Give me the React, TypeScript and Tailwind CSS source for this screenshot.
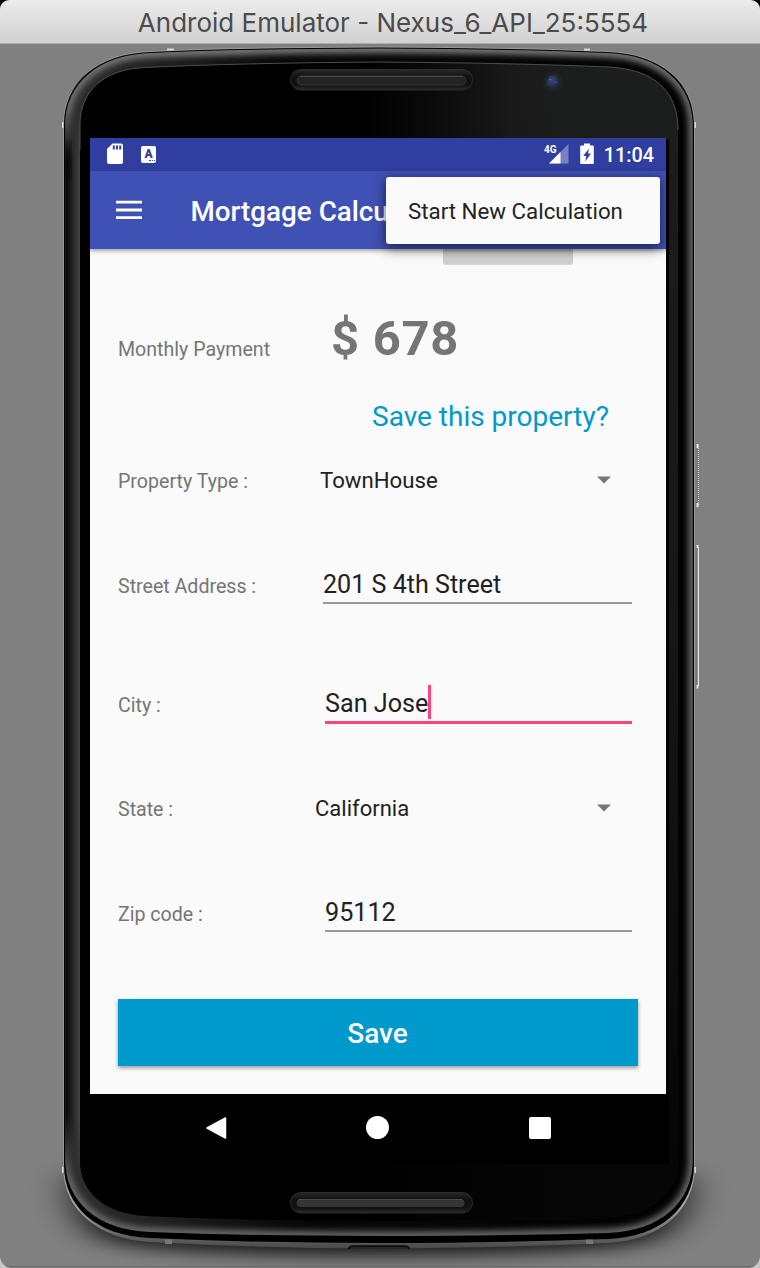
import React from "react";

const OUTER = "M64 125 C64 82 97 54 150 52 Q240 48 379 47.5 Q518 48 608 52 C661 54 694 82 694 125 V1165 C694 1207 661 1237 608 1239 Q500 1243 379 1243 Q258 1243 150 1238 C97 1236 64 1207 64 1165 Z";
const METAL = "M63.2 125 C63.2 82 97 53 150 51 Q240 47 379 46.5 Q518 47 608 51 C661 53 694.8 82 694.8 125 V1167 C694.8 1210 661 1240 608 1243 Q500 1248 379 1248.5 Q258 1248 150 1242 C97 1239 63.2 1209 63.2 1167 Z";
const BEVEL = "M65.2 125 C65.2 84 98 55 150 53 Q240 49 379 48.500 Q518 49 608 53 C660 55 692.8 84 692.8 125 V1160 C692.8 1202 661 1231 608 1233 Q500 1236 379 1236 Q258 1236 150 1232 C97 1230 65.2 1201 65.2 1160 Z";
const GLASS = "M80 125 C80 90 105 69 145 67.5 Q240 63 379 62 Q518 63 608 67 C653 69 678 90 678 130 V1160 C678 1193 650 1215 608 1217 Q500 1221 379 1221 Q258 1221 145 1216 C105 1213 80 1193 80 1160 Z";

function PhoneArt() {
  return (
    <svg className="absolute inset-0 h-full w-full" viewBox="0 44 760 1224">
      <defs>
        <linearGradient id="glass" gradientUnits="userSpaceOnUse" x1="360" y1="0" x2="560" y2="0">
          <stop offset="0" stopColor="#000" />
          <stop offset=".35" stopColor="#0a0a0a" />
          <stop offset=".75" stopColor="#181918" />
          <stop offset="1" stopColor="#1c1d1d" />
        </linearGradient>
        <linearGradient id="fade" x1="0" y1="0" x2="0" y2="1">
          <stop offset="0" stopColor="#000" stopOpacity="0" />
          <stop offset=".45" stopColor="#000" stopOpacity=".2" />
          <stop offset=".95" stopColor="#000" stopOpacity=".8" />
        </linearGradient>
        <linearGradient id="base" x1="0" y1="0" x2="1" y2="0">
          <stop offset="0" stopColor="#303030" />
          <stop offset=".14" stopColor="#222" />
          <stop offset=".35" stopColor="#080808" />
          <stop offset="1" stopColor="#020202" />
        </linearGradient>
        <linearGradient id="leftEdge" x1="0" y1="0" x2="1" y2="0">
          <stop offset="0" stopColor="#050505" />
          <stop offset=".5" stopColor="#232323" />
          <stop offset="1" stopColor="#454545" />
        </linearGradient>
        <linearGradient id="leftMask" x1="0" y1="0" x2="0" y2="1">
          <stop offset="0" stopColor="#fff" stopOpacity="0" />
          <stop offset=".05" stopColor="#fff" />
          <stop offset=".94" stopColor="#fff" />
          <stop offset="1" stopColor="#fff" stopOpacity="0" />
        </linearGradient>
        <mask id="sideMask">
          <rect x="60" y="110" width="25" height="1070" fill="url(#leftMask)" />
        </mask>
        <linearGradient id="rim" gradientUnits="userSpaceOnUse" x1="0" y1="47" x2="0" y2="1240">
          <stop offset="0" stopColor="#7c7c7c" />
          <stop offset=".08" stopColor="#666" />
          <stop offset=".9" stopColor="#666" />
          <stop offset="1" stopColor="#6a6a6a" />
        </linearGradient>
        <linearGradient id="metal" gradientUnits="userSpaceOnUse" x1="0" y1="1160" x2="0" y2="1248">
          <stop offset="0" stopColor="#9a9a9a" />
          <stop offset=".5" stopColor="#aaa" />
          <stop offset="1" stopColor="#4a4a4a" />
        </linearGradient>
        <linearGradient id="speaker" x1="0" y1="0" x2="0" y2="1">
          <stop offset="0" stopColor="#2a2a2a" />
          <stop offset=".35" stopColor="#101010" />
          <stop offset=".75" stopColor="#111" />
          <stop offset="1" stopColor="#2b2b2b" />
        </linearGradient>
        <radialGradient id="lens" cx=".4" cy=".4" r=".65">
          <stop offset="0" stopColor="#344a80" />
          <stop offset=".5" stopColor="#28345a" />
          <stop offset="1" stopColor="#1e2333" />
        </radialGradient>
        <filter id="soft" x="-20%" y="-60%" width="140%" height="240%">
          <feGaussianBlur stdDeviation="20 9" />
        </filter>
        <filter id="b3" x="-5%" y="-5%" width="110%" height="110%">
          <feGaussianBlur stdDeviation="3" />
        </filter>
        <clipPath id="clip">
          <path d={BEVEL} />
        </clipPath>
      </defs>
      <path d="M75 1175 H685 Q690 1226 650 1241 Q600 1254 379 1255 Q158 1254 108 1241 Q70 1226 75 1175 Z" fill="#000" opacity=".85" filter="url(#soft)" />
      <path d={METAL} fill="url(#metal)" />
      <path d={OUTER} fill="#000" />
      <g clipPath="url(#clip)">
        <path d={BEVEL} fill="url(#base)" />
        <path d={BEVEL} fill="none" stroke="url(#rim)" strokeWidth="9" filter="url(#b3)" />
        <rect x="65" y="110" width="15" height="1070" fill="url(#leftEdge)" mask="url(#sideMask)" />
        <ellipse cx="68" cy="160" rx="3" ry="20" fill="#000" opacity=".7" filter="url(#b3)" />
      </g>
      <path d={GLASS} fill="url(#glass)" />
      <path d={GLASS} fill="url(#fade)" />
      <path d="M80 150 V125 C80 90 105 69 145 67.500 Q240 63 379 62 Q518 63 608 67 C653 69 678 90 678 130" fill="none" stroke="#4d4d4d" strokeWidth="1" />
      <path d="M667.500 139 V1163" stroke="#000" strokeWidth="3" />
      <path d="M90 1163.500 H669" stroke="#000" strokeWidth="1" />
      <g fill="#d8d8d8">
        <rect x="167" y="48.500" width="7" height="2" />
        <rect x="584" y="48.500" width="6" height="2" />
        <rect x="62" y="122" width="1.500" height="6" />
        <rect x="694.500" y="122" width="1.500" height="6" />
        <rect x="62" y="1167" width="1.500" height="6" />
        <rect x="694.500" y="1167" width="1.500" height="6" />
      </g>
      <rect x="165" y="1239.500" width="7" height="4.500" fill="#777" />
      <rect x="586" y="1239.500" width="7" height="4.500" fill="#777" />
      <path d="M348.500 1249 Q349.500 1246 353 1246 H405 Q408.500 1246 409.500 1249" fill="#252525" stroke="#080808" strokeWidth="1.500" />

      <rect x="290.500" y="69.500" width="182" height="20.500" rx="10.200" fill="url(#speaker)" stroke="#2d2d2d" />
      <rect x="297" y="76" width="169" height="9" rx="4.500" fill="#242424" stroke="#343434" strokeWidth="1" />
      <path d="M300 76.500 H463" stroke="#4a4a4a" />
      <rect x="290.500" y="1192.500" width="182" height="20.500" rx="10.200" fill="url(#speaker)" stroke="#2d2d2d" />
      <rect x="296.500" y="1199" width="168" height="8" rx="4" fill="#353535" />
      <path d="M299 1199.500 H462" stroke="#4c4c4c" />
      <circle cx="553" cy="82" r="10" fill="#222" />
      <circle cx="553" cy="82" r="6.800" fill="url(#lens)" />
      <circle cx="550.500" cy="79.500" r=".8" fill="#6078b4" />
      <circle cx="555.500" cy="82" r=".8" fill="#4a5d92" />

      <rect x="696.500" y="445" width="2" height="61" rx="1" fill="#777" />
      <path d="M698.500 446 V505" stroke="#d0d0d0" strokeDasharray="1 1" />
      <path d="M697.500 444 V448 M697.500 503 V507" stroke="#f2f2f2" strokeWidth="1.800" />
      <path d="M698.200 547 V686" stroke="#f2f2f2" strokeWidth="1.400" />
      <path d="M697 547 V686" stroke="#686868" strokeWidth="1" />
      <path d="M697.500 545 V548 M697.500 685 V688.500" stroke="#eee" strokeWidth="1.800" />
      <path d="M0 1266.500 H760" stroke="#6b6b6b" />
      <path d="M0 1257 Q1 1266 10 1268 H0 Z M760 1257 Q759 1266 750 1268 H760 Z" fill="#c9c9c9" />
    </svg>
  );
}

function StatusBar() {
  return (
    <div className="flex h-[33px] items-center bg-[#303f9f] pb-[2px] pl-[16px] pr-[12px] text-white">
      <svg className="h-[22px] w-[18px]" viewBox="0 0 18 22">
        <path d="M6.500 .5 H15 Q17 .5 17 2.500 V19 Q17 21 15 21 H3 Q1 21 1 19 V6 Z" fill="#fff" />
        <path d="M7.800 2.500 V6.500 M11 2.500 V6.500 M14.200 2.500 V6.500" stroke="#303f9f" strokeWidth="2" />
      </svg>
      <div className="mt-px ml-[17px] flex h-[17px] w-[15px] flex-col items-center rounded-[2px] bg-white text-[#303f9f]">
        <span className="h-[14px] font-['Roboto',sans-serif] text-[12px] leading-[17px] font-black">A</span>
        <span className="ml-[6px] h-px w-[6px] border-t border-dotted border-[#303f9f]" />
      </div>
      <div className="flex-1" />
      <svg className="h-[22px] w-[26px]" viewBox="0 0 26 22">
        <path d="M6 20.500 L25.500 1 V20.500 Z" fill="#fff" opacity=".35" />
        <path d="M6 20.500 L17.500 9 V20.500 Z" fill="#fff" />
        <text x="1" y="9.500" fill="#fff" fontFamily="Roboto, sans-serif" fontWeight="700" fontSize="11.500" textLength="12.500" lengthAdjust="spacingAndGlyphs">4G</text>
      </svg>
      <svg className="ml-[11px] h-[22px] w-[14px]" viewBox="0 0 14 22">
        <path d="M4 .5 H10 V2.500 H12.500 Q13.800 2.500 13.800 3.500 V20 Q13.800 21 12.800 21 H1.200 Q.2 21 .2 20 V3.500 Q.2 2.500 1.500 2.500 H4 Z" fill="#fff" />
        <path d="M9 5.500 L3.200 13 H6.200 L5.300 18.500 L11 10.500 H8 Z" fill="#303f9f" />
      </svg>
      <span className="ml-[10px] pt-[4px] text-[19.800px] leading-[29px] font-medium">11:04</span>
    </div>
  );
}

function Toolbar() {
  return (
    <div className="relative z-10 flex h-[78px] items-center bg-[#3f51b5] pl-[26px] shadow-[0_2px_4px_rgba(0,0,0,.35)]">
      <svg className="h-[20px] w-[26px]" viewBox="0 0 26 20">
        <path d="M0 2.200 H26 M0 10 H26 M0 17.700 H26" stroke="#fff" strokeWidth="2.800" />
      </svg>
      <span className="ml-[48.500px] pt-[3px] text-[27.800px] font-medium whitespace-nowrap text-white">Mortgage Calcu</span>
      <div className="absolute top-[5.500px] right-[6px] flex h-[67px] w-[274.500px] items-center rounded-[3px] bg-[#fafafa] pl-[22.500px] text-[22.300px] text-[#222] shadow-[0_5px_14px_rgba(0,0,0,.45),0_0_8px_rgba(0,0,0,.25)]">
        <span className="pt-[3px]">Start New Calculation</span>
      </div>
    </div>
  );
}

function Caret() {
  return (
    <svg className="h-[8px] w-[14px]" viewBox="0 0 14 8">
      <path d="M0 .5 H14 L7 7.500 Z" fill="#757575" />
    </svg>
  );
}

function Label({ children }: { children: React.ReactNode }) {
  return <span className="w-[202px] shrink-0 pt-[4px] text-[19.600px] whitespace-nowrap text-[#757575]">{children}</span>;
}

function FieldLabel({ children }: { children: React.ReactNode }) {
  return <span className="shrink-0 pt-[6px] text-[19.600px] whitespace-nowrap text-[#757575]">{children}</span>;
}

function Form() {
  return (
    <div className="flex h-[845px] flex-col overflow-hidden bg-[#fafafa] pr-[28px] pl-[28px] text-[#212121]">
      <div className="ml-[325px] h-[15px] w-[130px] shrink-0 rounded-b-[3px] bg-[#cfd0d0] shadow-[0_1px_1px_rgba(0,0,0,.15)]" />
      <div className="mt-[41px] flex h-[66px] items-center">
        <span className="w-[213px] pt-[23px] text-[19.600px] whitespace-nowrap text-[#757575]">Monthly Payment</span>
        <span className="pt-[2px] text-[49px] font-bold tracking-[0.700px] text-[#757575]">$ 678</span>
      </div>
      <div className="mt-[26px] flex h-[40px] items-center pl-[254px] text-[28px] text-[#0099cc]">Save this property?</div>
      <div className="mt-[23px] flex h-[40px] items-center">
        <Label>Property Type :</Label>
        <span className="flex-1 pt-px text-[22.200px]">TownHouse</span>
        <span className="pr-[27px]"><Caret /></span>
      </div>
      <div className="mt-[64px] flex h-[40px] items-center">
        <FieldLabel>Street Address :</FieldLabel>
        <span className="ml-auto mr-[6px] h-[40px] w-[309px] border-b-2 border-[#999] text-[25.100px] leading-[41px]">201 S 4th Street</span>
      </div>
      <div className="mt-[80px] flex h-[40px] items-center">
        <Label>City :</Label>
        <span className="ml-[5px] flex h-[40px] w-[307px] items-start border-b-[3px] border-[#ff4081] text-[25.200px] leading-[40px]">
          San Jose
          <span className="mt-px h-[34px] w-[2.500px] bg-[#ff4081]" />
        </span>
      </div>
      <div className="mt-[64px] flex h-[40px] items-center">
        <Label>State :</Label>
        <span className="-ml-[5px] flex-1 pt-px text-[22px]">California</span>
        <span className="pr-[27px]"><Caret /></span>
      </div>
      <div className="mt-[64px] flex h-[40px] items-center">
        <FieldLabel>Zip code :</FieldLabel>
        <span className="ml-auto mr-[6px] h-[40px] w-[307px] border-b-2 border-[#999] text-[25.200px] leading-[41px]">95112</span>
      </div>
      <button className="mt-[67px] h-[67px] shrink-0 bg-[#0099cc] pt-[2px] pr-px text-[28px] font-medium text-white shadow-[0_2px_4px_rgba(0,0,0,.4)]">Save</button>
    </div>
  );
}

function NavBar() {
  return (
    <div className="flex h-[69px] items-center bg-black pb-[2px] pl-[115px]">
      <svg className="h-[26px] w-[22px]" viewBox="0 0 22 26">
        <path d="M20.500 3 V23 L2 13 Z" fill="#fff" stroke="#fff" strokeWidth="1.500" strokeLinejoin="round" />
      </svg>
      <div className="ml-[139px] h-[23px] w-[23px] rounded-full bg-white" />
      <div className="ml-[140px] h-[22px] w-[22px] rounded-[2px] bg-white" />
    </div>
  );
}

export default function App() {
  return (
    <div className="h-[1268px] w-[760px] overflow-hidden bg-black font-['Roboto',sans-serif]">
      <div className="flex h-11 items-center justify-center rounded-t-[9px] border-b border-[#aeaeae] bg-linear-to-b from-[#ececec] to-[#d1d1d1] pt-[2px] pl-[26px] font-['Inter',sans-serif] text-[26px] whitespace-nowrap text-[#4b4b4b]">
        Android Emulator - Nexus_6_API_25:5554
      </div>
      <div className="relative h-[1224px] bg-[#808080] pt-[94px] pl-[90px]">
        <PhoneArt />
        <div className="relative w-[576px]">
          <StatusBar />
          <Toolbar />
          <Form />
          <NavBar />
        </div>
      </div>
    </div>
  );
}
